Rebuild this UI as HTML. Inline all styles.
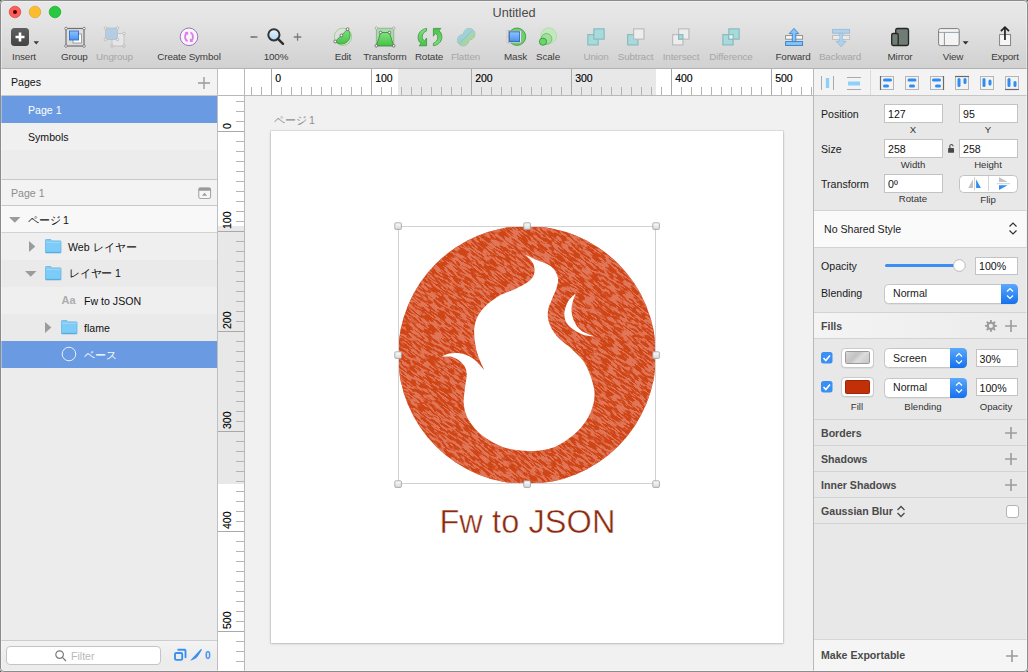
<!DOCTYPE html>
<html><head><meta charset="utf-8">
<style>
*{margin:0;padding:0;box-sizing:border-box}
html,body{width:1028px;height:672px;overflow:hidden;background:#2f6b3c}
body{font-family:"Liberation Sans",sans-serif;position:relative;color:#111}
.a{position:absolute}
svg.a{overflow:visible}
.t{position:absolute;white-space:nowrap;line-height:1}
</style></head><body>

<div class="a" style="left:0;top:0;width:1028px;height:672px;overflow:hidden;border-radius:4px;background:#ececec">
<div class="a" style="left:0px;top:0px;width:1028px;height:68px;background:linear-gradient(#e8e8e8 0px,#e4e4e4 20px,#d1d1d1 68px)"></div>
<div class="a" style="left:0px;top:68px;width:1028px;height:1px;background:#b2b2b2"></div>
<svg class="a" style="left:0px;top:0px;" width="70" height="24" viewBox="0 0 70 24">
<circle cx="15" cy="12" r="5.8" fill="#fc5f57" stroke="#e0443e" stroke-width="0.7"/>
<circle cx="15" cy="12" r="2" fill="#4d0000"/>
<circle cx="35" cy="12" r="5.8" fill="#fdbb2e" stroke="#dea236" stroke-width="0.7"/>
<circle cx="55" cy="12" r="5.8" fill="#28c840" stroke="#1aab29" stroke-width="0.7"/>
</svg>
<div class="t" style="left:364px;width:300px;text-align:center;top:6.55px;font-size:12.7px;color:#4a4a4a;font-weight:normal;">Untitled</div>
<div class="t" style="left:-126px;width:300px;text-align:center;top:51.62px;font-size:9.9px;color:#3c3c3c;font-weight:normal;letter-spacing:-0.15px">Insert</div>
<div class="t" style="left:-75.7px;width:300px;text-align:center;top:51.62px;font-size:9.9px;color:#3c3c3c;font-weight:normal;letter-spacing:-0.15px">Group</div>
<div class="t" style="left:-35.5px;width:300px;text-align:center;top:51.62px;font-size:9.9px;color:#a6a6a6;font-weight:normal;letter-spacing:-0.15px">Ungroup</div>
<div class="t" style="left:39px;width:300px;text-align:center;top:51.62px;font-size:9.9px;color:#3c3c3c;font-weight:normal;letter-spacing:-0.15px">Create Symbol</div>
<div class="t" style="left:126px;width:300px;text-align:center;top:51.62px;font-size:9.9px;color:#3c3c3c;font-weight:normal;letter-spacing:-0.15px">100%</div>
<div class="t" style="left:193px;width:300px;text-align:center;top:51.62px;font-size:9.9px;color:#3c3c3c;font-weight:normal;letter-spacing:-0.15px">Edit</div>
<div class="t" style="left:235px;width:300px;text-align:center;top:51.62px;font-size:9.9px;color:#3c3c3c;font-weight:normal;letter-spacing:-0.15px">Transform</div>
<div class="t" style="left:279px;width:300px;text-align:center;top:51.62px;font-size:9.9px;color:#3c3c3c;font-weight:normal;letter-spacing:-0.15px">Rotate</div>
<div class="t" style="left:315.5px;width:300px;text-align:center;top:51.62px;font-size:9.9px;color:#a6a6a6;font-weight:normal;letter-spacing:-0.15px">Flatten</div>
<div class="t" style="left:365.5px;width:300px;text-align:center;top:51.62px;font-size:9.9px;color:#3c3c3c;font-weight:normal;letter-spacing:-0.15px">Mask</div>
<div class="t" style="left:398px;width:300px;text-align:center;top:51.62px;font-size:9.9px;color:#3c3c3c;font-weight:normal;letter-spacing:-0.15px">Scale</div>
<div class="t" style="left:446px;width:300px;text-align:center;top:51.62px;font-size:9.9px;color:#a6a6a6;font-weight:normal;letter-spacing:-0.15px">Union</div>
<div class="t" style="left:485.5px;width:300px;text-align:center;top:51.62px;font-size:9.9px;color:#a6a6a6;font-weight:normal;letter-spacing:-0.15px">Subtract</div>
<div class="t" style="left:531px;width:300px;text-align:center;top:51.62px;font-size:9.9px;color:#a6a6a6;font-weight:normal;letter-spacing:-0.15px">Intersect</div>
<div class="t" style="left:581px;width:300px;text-align:center;top:51.62px;font-size:9.9px;color:#a6a6a6;font-weight:normal;letter-spacing:-0.15px">Difference</div>
<div class="t" style="left:643px;width:300px;text-align:center;top:51.62px;font-size:9.9px;color:#3c3c3c;font-weight:normal;letter-spacing:-0.15px">Forward</div>
<div class="t" style="left:690px;width:300px;text-align:center;top:51.62px;font-size:9.9px;color:#a6a6a6;font-weight:normal;letter-spacing:-0.15px">Backward</div>
<div class="t" style="left:750px;width:300px;text-align:center;top:51.62px;font-size:9.9px;color:#3c3c3c;font-weight:normal;letter-spacing:-0.15px">Mirror</div>
<div class="t" style="left:803px;width:300px;text-align:center;top:51.62px;font-size:9.9px;color:#3c3c3c;font-weight:normal;letter-spacing:-0.15px">View</div>
<div class="t" style="left:855px;width:300px;text-align:center;top:51.62px;font-size:9.9px;color:#3c3c3c;font-weight:normal;letter-spacing:-0.15px">Export</div>
<svg class="a" style="left:0;top:0" width="1028" height="68" viewBox="0 0 1028 68">
<defs>
<linearGradient id="gIns" x1="0" y1="0" x2="0" y2="1"><stop offset="0" stop-color="#5e5e5e"/><stop offset="1" stop-color="#444"/></linearGradient>
<linearGradient id="gBlue" x1="0" y1="0" x2="0" y2="1"><stop offset="0" stop-color="#8cc4ff"/><stop offset="1" stop-color="#4a94ef"/></linearGradient>
<linearGradient id="gGreen" x1="0" y1="0" x2="0" y2="1"><stop offset="0" stop-color="#7ee27e"/><stop offset="1" stop-color="#47c247"/></linearGradient>
<linearGradient id="gMag" x1="0" y1="0" x2="0" y2="1"><stop offset="0" stop-color="#eaf6ff"/><stop offset="1" stop-color="#a9d6f5"/></linearGradient>
</defs>
<!-- Insert -->
<rect x="11" y="28" width="18" height="18" rx="3.5" fill="url(#gIns)"/>
<path d="M20 32.5v9M15.5 37h9" stroke="#fff" stroke-width="2.6"/>
<path d="M33.5 41.3h5.5l-2.75 3.2z" fill="#3a3a3a"/>
<!-- Group -->
<rect x="66" y="28.5" width="18" height="17.5" fill="none" stroke="#6f6f6f" stroke-width="1.2"/>
<rect x="73" y="34" width="8.5" height="9" fill="#fff" stroke="#8a8a8a" stroke-width="0.8"/>
<rect x="69.5" y="31" width="9" height="9" fill="url(#gBlue)" stroke="#2f6fc8" stroke-width="0.9"/>
<circle cx="66" cy="28.5" r="1.3" fill="#fff" stroke="#6f6f6f" stroke-width="0.8"/><circle cx="84" cy="28.5" r="1.3" fill="#fff" stroke="#6f6f6f" stroke-width="0.8"/><circle cx="66" cy="46" r="1.3" fill="#fff" stroke="#6f6f6f" stroke-width="0.8"/><circle cx="84" cy="46" r="1.3" fill="#fff" stroke="#6f6f6f" stroke-width="0.8"/>
<!-- Ungroup -->
<g opacity="0.45">
<rect x="112" y="33.5" width="12" height="12.5" fill="#f4f4f4" stroke="#999" stroke-width="0.8"/>
<rect x="105.5" y="28" width="12" height="11.5" fill="#7fb8ee" stroke="#888" stroke-width="0.6"/>
<circle cx="105.5" cy="28" r="1.3" fill="#fff" stroke="#888" stroke-width="0.8"/><circle cx="117.5" cy="28" r="1.3" fill="#fff" stroke="#888" stroke-width="0.8"/><circle cx="105.5" cy="39.5" r="1.3" fill="#fff" stroke="#888" stroke-width="0.8"/><circle cx="117.5" cy="39.5" r="1.3" fill="#fff" stroke="#888" stroke-width="0.8"/><circle cx="112" cy="46" r="1.3" fill="#fff" stroke="#888" stroke-width="0.8"/><circle cx="124" cy="46" r="1.3" fill="#fff" stroke="#888" stroke-width="0.8"/><circle cx="124" cy="33.5" r="1.3" fill="#fff" stroke="#888" stroke-width="0.8"/>
</g>
<!-- Create Symbol -->
<circle cx="189" cy="36.8" r="8.8" fill="#f6f6f6" stroke="#a070c8" stroke-width="1"/>
<path d="M187.3 32.8 C184.3 34 184.3 39.8 187.6 41.1" fill="none" stroke="#e07af2" stroke-width="1.8"/>
<path d="M188.2 31.7 L184.6 31.9 L188 35.3z" fill="#e07af2"/>
<path d="M190.7 40.8 C193.7 39.6 193.7 33.8 190.4 32.5" fill="none" stroke="#e07af2" stroke-width="1.8"/>
<path d="M189.8 41.9 L193.4 41.7 L190 38.3z" fill="#e07af2"/>
<!-- zoom -->
<path d="M250.5 37h7" stroke="#6a6a6a" stroke-width="1.3"/>
<path d="M293.8 37h7.5M297.55 33.2v7.6" stroke="#7a7a7a" stroke-width="1.3"/>
<circle cx="273.9" cy="34.8" r="5.6" fill="url(#gMag)" stroke="#333" stroke-width="2"/>
<path d="M278 38.8l5 5" stroke="#2e2e2e" stroke-width="2.4" stroke-linecap="round"/>
<!-- Edit -->
<circle cx="343" cy="36.8" r="8.7" fill="none" stroke="#8fd08f" stroke-width="0.9"/>
<path d="M335.2 41.5 L347.6 29.2 A8.7 8.7 0 0 1 335.2 41.5z" fill="url(#gGreen)" stroke="#3f9e3f" stroke-width="0.9"/>
<circle cx="335.2" cy="41.5" r="1.4" fill="#fff" stroke="#555" stroke-width="0.8"/><circle cx="341.4" cy="35.4" r="1.4" fill="#fff" stroke="#555" stroke-width="0.8"/><circle cx="347.6" cy="29.2" r="1.4" fill="#fff" stroke="#555" stroke-width="0.8"/>
<!-- Transform -->
<rect x="376.3" y="28.2" width="17.5" height="17.8" fill="#a8dca8" stroke="#8aa88a" stroke-width="0.8"/>
<path d="M380.6 32.5h8.8l4.2 13.3h-17.2z" fill="url(#gGreen)" stroke="#3f8e3f" stroke-width="0.9"/>
<circle cx="376.3" cy="28.2" r="1.2" fill="#fff" stroke="#999" stroke-width="0.8"/><circle cx="393.8" cy="28.2" r="1.2" fill="#fff" stroke="#999" stroke-width="0.8"/>
<circle cx="380.6" cy="32.5" r="1.3" fill="#fff" stroke="#555" stroke-width="0.8"/><circle cx="389.4" cy="32.5" r="1.3" fill="#fff" stroke="#555" stroke-width="0.8"/><circle cx="376.3" cy="45.8" r="1.3" fill="#fff" stroke="#555" stroke-width="0.8"/><circle cx="393.7" cy="45.8" r="1.3" fill="#fff" stroke="#555" stroke-width="0.8"/>
<!-- Rotate -->
<path d="M426.6 28.4 C421 29.2 417.5 33.5 418.2 38.5 C418.5 40.5 419.5 42.5 421 43.6 L419.1 45.8 L426.6 45.8 L426.6 38 L424.4 41 C421.6 39 420.8 33.5 426.6 30.9 Z" fill="url(#gGreen)" stroke="#3a8f3a" stroke-width="0.75" stroke-linejoin="round"/>
<path d="M426.6 28.4 C421 29.2 417.5 33.5 418.2 38.5 C418.5 40.5 419.5 42.5 421 43.6 L419.1 45.8 L426.6 45.8 L426.6 38 L424.4 41 C421.6 39 420.8 33.5 426.6 30.9 Z" transform="rotate(180 430 37.1)" fill="url(#gGreen)" stroke="#3a8f3a" stroke-width="0.75" stroke-linejoin="round"/>
<!-- Flatten -->
<defs><clipPath id="fUL"><path d="M440 10 H500 L459.3 43.7 L440 60z" transform="translate(0 0)"/></clipPath></defs>
<g opacity="0.5">
<circle cx="463.2" cy="40.2" r="5.7" fill="none" stroke="#5f8f88" stroke-width="1"/>
<circle cx="469.2" cy="34.2" r="5.7" fill="none" stroke="#5f8f88" stroke-width="1"/>
<circle cx="463.2" cy="40.2" r="5.7" fill="#6fd06f"/>
<circle cx="469.2" cy="34.2" r="5.7" fill="#6fd06f"/>
<g clip-path="url(#fUL)"><circle cx="463.2" cy="40.2" r="5.7" fill="#5ec4d8"/><circle cx="469.2" cy="34.2" r="5.7" fill="#5ec4d8"/></g>
<path d="M459 43.9 L472.6 30.4" stroke="#5f8f88" stroke-width="0.8"/>
</g>
<!-- Mask -->
<rect x="506.5" y="30.5" width="15" height="12.5" fill="none" stroke="#d0d0d0" stroke-width="0.8"/>
<circle cx="517" cy="36.7" r="8.7" fill="#66d466" stroke="#3c9a45" stroke-width="0.9"/>
<rect x="508.3" y="30.8" width="13" height="12" fill="#fafafa" stroke="#9a9a9a" stroke-width="0.6"/>
<rect x="509.3" y="31.8" width="10.4" height="9.6" fill="url(#gBlue)" stroke="#2a5db0" stroke-width="0.9"/>
<!-- Scale -->
<circle cx="548.7" cy="35.7" r="7.9" fill="#c2e8bb" stroke="#a8d4a2" stroke-width="0.6"/>
<circle cx="546.5" cy="38.9" r="5.4" fill="#9fe09b" stroke="#5fae60" stroke-width="0.7"/>
<circle cx="543" cy="41.7" r="3.6" fill="#68d868" stroke="#338a3a" stroke-width="0.8"/>
<!-- Union -->
<rect x="587.85" y="34.65" width="10.3" height="10.3" fill="#a6dadc" stroke="#86b9b9" stroke-width="1.1"/><rect x="593.85" y="28.85" width="10.3" height="10.3" fill="#a6dadc" stroke="#86b9b9" stroke-width="1.1"/><rect x="627.65" y="34.65" width="10.3" height="10.3" fill="#a6dadc" stroke="#86b9b9" stroke-width="1.1"/><rect x="633.65" y="28.85" width="10.3" height="10.3" fill="#ededed" stroke="#b8b8b8" stroke-width="1.1"/><rect x="672.65" y="34.65" width="10.3" height="10.3" fill="#ededed" stroke="#b8b8b8" stroke-width="1.1"/><rect x="678.65" y="28.85" width="10.3" height="10.3" fill="#ededed" stroke="#b8b8b8" stroke-width="1.1"/><rect x="678.65" y="34.65" width="4.30" height="4.50" fill="#a6dadc" stroke="#86b9b9" stroke-width="1.1"/><rect x="722.85" y="34.65" width="10.3" height="10.3" fill="#a6dadc" stroke="#86b9b9" stroke-width="1.1"/><rect x="728.85" y="28.85" width="10.3" height="10.3" fill="#a6dadc" stroke="#86b9b9" stroke-width="1.1"/><rect x="728.85" y="34.65" width="4.30" height="4.50" fill="#f2f2f2" stroke="#86b9b9" stroke-width="1.1"/>
<!-- Forward -->
<rect x="785.6" y="35.6" width="17" height="3.6" fill="#f8f8f8" stroke="#8a8a8a" stroke-width="0.9"/>
<rect x="785.6" y="41.6" width="17" height="3.8" fill="#80c6fb" stroke="#3b78c4" stroke-width="0.9"/>
<path d="M794 28.4 L798.8 33.6 H795.8 V41.6 H792.3 V33.6 H789.2z" fill="#80c6fb" stroke="#3b78c4" stroke-width="0.8" stroke-linejoin="round"/>
<!-- Backward -->
<g opacity="0.5">
<rect x="832.6" y="29.4" width="17" height="3.8" fill="#80c6fb" stroke="#5d95d0" stroke-width="0.9"/>
<rect x="832.6" y="35.6" width="17" height="3.6" fill="#f8f8f8" stroke="#8a8a8a" stroke-width="0.9"/>
<path d="M841.1 46.8 L846.2 41.3 H843 V33.2 H839.3 V41.3 H836z" fill="#80c6fb" stroke="#5d95d0" stroke-width="0.8" stroke-linejoin="round"/>
<rect x="833" y="35.9" width="6.3" height="3" fill="#f8f8f8"/><rect x="843" y="35.9" width="6.3" height="3" fill="#f8f8f8"/>
</g>
<!-- Mirror -->
<rect x="895.7" y="28.5" width="12.8" height="17" rx="1.8" fill="#6f7d75" stroke="#262626" stroke-width="1.3"/>
<rect x="891.7" y="33.5" width="6.5" height="12" rx="1.5" fill="#6f7d75" stroke="#262626" stroke-width="1.3"/>
<!-- View -->
<rect x="938.6" y="28.6" width="20.6" height="17" rx="1.8" fill="#f4f4f4" stroke="#7c7c7c" stroke-width="1"/>
<path d="M939 32.4h20" stroke="#8a97a8" stroke-width="0.9"/><path d="M944.4 32.4v13" stroke="#8a8a8a" stroke-width="0.9"/>
<path d="M962.6 41.2h6l-3 3.2z" fill="#2e2e2e"/>
<!-- Export -->
<rect x="999.6" y="34.6" width="11" height="10.9" fill="#f6f6f6" stroke="#7a7a7a" stroke-width="0.9"/>
<path d="M1004.95 40V27.8" stroke="#1f1f1f" stroke-width="1.7"/>
<path d="M1000.9 31.2l4.05-4 4.05 4" fill="none" stroke="#1f1f1f" stroke-width="1.7"/>
</svg>
<div class="a" style="left:0px;top:69px;width:218px;height:603px;background:#ececec"></div>
<div class="a" style="left:217px;top:69px;width:1px;height:603px;background:#bfbfbf"></div>
<div class="a" style="left:0px;top:69px;width:217px;height:26px;background:#f3f3f3"></div>
<div class="a" style="left:0px;top:95px;width:217px;height:1px;background:#c8c8c8"></div>
<div class="t" style="left:11px;top:76.73px;font-size:10.6px;color:#111;font-weight:normal;">Pages</div>
<svg class="a" style="left:197px;top:76px;" width="14" height="14" viewBox="0 0 14 14"><path d="M7 1v12M1 7h12" stroke="#9b9b9b" stroke-width="1.4"/></svg>
<div class="a" style="left:0px;top:96px;width:217px;height:27px;background:#6a9ae1"></div>
<div class="t" style="left:28px;top:105.03px;font-size:10.6px;color:#fff;font-weight:normal;">Page 1</div>
<div class="a" style="left:0px;top:123px;width:217px;height:27px;background:#f0f0f0"></div>
<div class="t" style="left:28px;top:131.83px;font-size:10.6px;color:#111;font-weight:normal;">Symbols</div>
<div class="a" style="left:0px;top:150px;width:217px;height:29px;background:#ececec"></div>
<div class="a" style="left:0px;top:179px;width:217px;height:1px;background:#c8c8c8"></div>
<div class="a" style="left:0px;top:180px;width:217px;height:25px;background:#f3f3f3"></div>
<div class="a" style="left:0px;top:205px;width:217px;height:1px;background:#c8c8c8"></div>
<div class="t" style="left:11px;top:187.73px;font-size:10.6px;color:#8c8c8c;font-weight:normal;">Page 1</div>
<svg class="a" style="left:198px;top:187px;" width="14" height="13" viewBox="0 0 14 13"><rect x="0.75" y="0.75" width="11.8" height="10.8" rx="1.8" fill="#f6f6f6" stroke="#a6a6a6" stroke-width="1.1"/><path d="M0.9 2.4h11.5" stroke="#9a9a9a" stroke-width="2.6"/><path d="M3.9 8.8h5.2l-2.6-3z" fill="#9c9c9c"/></svg>
<div class="a" style="left:0px;top:206px;width:217px;height:26px;background:#f8f8f8"></div>
<div class="a" style="left:0px;top:232px;width:217px;height:1px;background:#d2d2d2"></div>
<svg class="a" style="left:9px;top:217px;" width="12" height="6" viewBox="0 0 12 6"><path d="M0 0h11.5l-5.75 5.8z" fill="#9b9b9b"/></svg>
<div class="t" style="left:28px;top:214.93px;font-size:10.6px;color:#111;font-weight:normal;">ページ<span style="margin-left:2px">1</span></div>
<div class="a" style="left:0px;top:233px;width:217px;height:27px;background:#efefef"></div>
<svg class="a" style="left:29px;top:241px;" width="7" height="11" viewBox="0 0 7 11"><path d="M0 0v11l6.3-5.5z" fill="#9b9b9b"/></svg>
<svg class="a" style="left:45px;top:239px;" width="17" height="14" viewBox="0 0 17 14"><path d="M0.5 1.2a0.7 0.7 0 0 1 0.7-0.7h4.6l1.3 1.4h8.2a0.7 0.7 0 0 1 0.7 0.7v10.6a0.7 0.7 0 0 1-0.7 0.7h-14.1a0.7 0.7 0 0 1-0.7-0.7z" fill="#7dcbf7" stroke="#67b5e6" stroke-width="0.8"/><path d="M0.9 3.3h14.7" stroke="#a9dcf9" stroke-width="0.8"/><path d="M0.9 13.4h14.7" stroke="#55a6da" stroke-width="0.9"/></svg>
<div class="t" style="left:68px;top:241.63px;font-size:10.6px;color:#111;font-weight:normal;">Web レイヤー</div>
<div class="a" style="left:0px;top:260px;width:217px;height:27px;background:#eaeaea"></div>
<svg class="a" style="left:25px;top:271px;" width="12" height="6" viewBox="0 0 12 6"><path d="M0 0h11.5l-5.75 5.8z" fill="#9b9b9b"/></svg>
<svg class="a" style="left:45px;top:266px;" width="17" height="14" viewBox="0 0 17 14"><path d="M0.5 1.2a0.7 0.7 0 0 1 0.7-0.7h4.6l1.3 1.4h8.2a0.7 0.7 0 0 1 0.7 0.7v10.6a0.7 0.7 0 0 1-0.7 0.7h-14.1a0.7 0.7 0 0 1-0.7-0.7z" fill="#7dcbf7" stroke="#67b5e6" stroke-width="0.8"/><path d="M0.9 3.3h14.7" stroke="#a9dcf9" stroke-width="0.8"/><path d="M0.9 13.4h14.7" stroke="#55a6da" stroke-width="0.9"/></svg>
<div class="t" style="left:69px;top:268.03px;font-size:10.6px;color:#111;font-weight:normal;letter-spacing:-0.2px">レイヤー 1</div>
<div class="a" style="left:0px;top:287px;width:217px;height:27px;background:#efefef"></div>
<div class="t" style="left:61.5px;top:295.29px;font-size:11px;color:#adadad;font-weight:bold;">Aa</div>
<div class="t" style="left:84px;top:295.63px;font-size:10.6px;color:#111;font-weight:normal;">Fw to JSON</div>
<div class="a" style="left:0px;top:314px;width:217px;height:27px;background:#eaeaea"></div>
<svg class="a" style="left:45px;top:322px;" width="7" height="11" viewBox="0 0 7 11"><path d="M0 0v11l6.3-5.5z" fill="#9b9b9b"/></svg>
<svg class="a" style="left:61px;top:320px;" width="17" height="14" viewBox="0 0 17 14"><path d="M0.5 1.2a0.7 0.7 0 0 1 0.7-0.7h4.6l1.3 1.4h8.2a0.7 0.7 0 0 1 0.7 0.7v10.6a0.7 0.7 0 0 1-0.7 0.7h-14.1a0.7 0.7 0 0 1-0.7-0.7z" fill="#7dcbf7" stroke="#67b5e6" stroke-width="0.8"/><path d="M0.9 3.3h14.7" stroke="#a9dcf9" stroke-width="0.8"/><path d="M0.9 13.4h14.7" stroke="#55a6da" stroke-width="0.9"/></svg>
<div class="t" style="left:84px;top:322.63px;font-size:10.6px;color:#111;font-weight:normal;">flame</div>
<div class="a" style="left:0px;top:341px;width:217px;height:27px;background:#6a9ae1"></div>
<svg class="a" style="left:61px;top:346px;" width="16" height="16" viewBox="0 0 16 16"><circle cx="8" cy="8" r="6.8" fill="none" stroke="#e8f0fb" stroke-width="1"/></svg>
<div class="t" style="left:84px;top:349.63px;font-size:10.6px;color:#fff;font-weight:normal;">ベース</div>
<div class="a" style="left:0px;top:640px;width:217px;height:1px;background:#cdcdcd"></div>
<div class="a" style="left:0px;top:641px;width:217px;height:31px;background:linear-gradient(#f3f3f3,#ececec 60%)"></div>
<div class="a" style="left:5.5px;top:646px;width:155px;height:18.5px;background:#fff;border:1px solid #c4c4c4;border-radius:4px"></div>
<svg class="a" style="left:55px;top:650px;" width="12" height="12" viewBox="0 0 12 12"><circle cx="4.6" cy="4.6" r="3.8" fill="none" stroke="#7a7a7a" stroke-width="1.2"/><path d="M7.4 7.4l3.6 3.6" stroke="#7a7a7a" stroke-width="1.3"/></svg>
<div class="t" style="left:71px;top:651.03px;font-size:10.6px;color:#b8b8b8;font-weight:normal;">Filter</div>
<svg class="a" style="left:0;top:0" width="1028" height="672" viewBox="0 0 1028 672"><rect x="175" y="653" width="7.2" height="6.9" rx="1.2" fill="none" stroke="#3b8ef2" stroke-width="1.9"/><path d="M178.2 649.8H184.6a0.9 0.9 0 0 1 0.9 0.9V657.3" fill="none" stroke="#3b8ef2" stroke-width="1.9" stroke-linecap="round"/><path d="M190 660.8 L200.4 649.6 Q201.9 648.4 201.8 650.1 L199.2 654.2 Q196.5 659.2 190 660.8z" fill="#3b8ef2"/><text x="205" y="659.3" font-size="10" font-weight="bold" fill="#3b8ef2" font-family="Liberation Sans">0</text></svg>
<div class="a" style="left:218px;top:69px;width:26px;height:26px;background:#fff"></div>
<div class="a" style="left:244px;top:69px;width:569px;height:26px;background:#fff"></div>
<div class="a" style="left:398px;top:69px;width:258px;height:26px;background:#e8e8e8"></div>
<div class="a" style="left:244px;top:95px;width:569px;height:1px;background:#b8b8b8"></div>
<div class="a" style="left:244px;top:69px;width:1px;height:603px;background:#b8b8b8"></div>
<svg class="a" style="left:0;top:0" width="1028" height="672" viewBox="0 0 1028 672"><path d="M251.5 87V95" stroke="#b4b4b4" stroke-width="1"/><path d="M261.5 87V95" stroke="#b4b4b4" stroke-width="1"/><path d="M271.5 69V95" stroke="#a9a9a9" stroke-width="1"/><path d="M281.5 87V95" stroke="#b4b4b4" stroke-width="1"/><path d="M291.5 87V95" stroke="#b4b4b4" stroke-width="1"/><path d="M301.5 87V95" stroke="#b4b4b4" stroke-width="1"/><path d="M311.5 87V95" stroke="#b4b4b4" stroke-width="1"/><path d="M321.5 87V95" stroke="#b4b4b4" stroke-width="1"/><path d="M331.5 87V95" stroke="#b4b4b4" stroke-width="1"/><path d="M341.5 87V95" stroke="#b4b4b4" stroke-width="1"/><path d="M351.5 87V95" stroke="#b4b4b4" stroke-width="1"/><path d="M361.5 87V95" stroke="#b4b4b4" stroke-width="1"/><path d="M371.5 69V95" stroke="#a9a9a9" stroke-width="1"/><path d="M381.5 87V95" stroke="#b4b4b4" stroke-width="1"/><path d="M391.5 87V95" stroke="#b4b4b4" stroke-width="1"/><path d="M401.5 87V95" stroke="#b4b4b4" stroke-width="1"/><path d="M411.5 87V95" stroke="#b4b4b4" stroke-width="1"/><path d="M421.5 87V95" stroke="#b4b4b4" stroke-width="1"/><path d="M431.5 87V95" stroke="#b4b4b4" stroke-width="1"/><path d="M441.5 87V95" stroke="#b4b4b4" stroke-width="1"/><path d="M451.5 87V95" stroke="#b4b4b4" stroke-width="1"/><path d="M461.5 87V95" stroke="#b4b4b4" stroke-width="1"/><path d="M471.5 69V95" stroke="#a9a9a9" stroke-width="1"/><path d="M481.5 87V95" stroke="#b4b4b4" stroke-width="1"/><path d="M491.5 87V95" stroke="#b4b4b4" stroke-width="1"/><path d="M501.5 87V95" stroke="#b4b4b4" stroke-width="1"/><path d="M511.5 87V95" stroke="#b4b4b4" stroke-width="1"/><path d="M521.5 87V95" stroke="#b4b4b4" stroke-width="1"/><path d="M531.5 87V95" stroke="#b4b4b4" stroke-width="1"/><path d="M541.5 87V95" stroke="#b4b4b4" stroke-width="1"/><path d="M551.5 87V95" stroke="#b4b4b4" stroke-width="1"/><path d="M561.5 87V95" stroke="#b4b4b4" stroke-width="1"/><path d="M571.5 69V95" stroke="#a9a9a9" stroke-width="1"/><path d="M581.5 87V95" stroke="#b4b4b4" stroke-width="1"/><path d="M591.5 87V95" stroke="#b4b4b4" stroke-width="1"/><path d="M601.5 87V95" stroke="#b4b4b4" stroke-width="1"/><path d="M611.5 87V95" stroke="#b4b4b4" stroke-width="1"/><path d="M621.5 87V95" stroke="#b4b4b4" stroke-width="1"/><path d="M631.5 87V95" stroke="#b4b4b4" stroke-width="1"/><path d="M641.5 87V95" stroke="#b4b4b4" stroke-width="1"/><path d="M651.5 87V95" stroke="#b4b4b4" stroke-width="1"/><path d="M661.5 87V95" stroke="#b4b4b4" stroke-width="1"/><path d="M671.5 69V95" stroke="#a9a9a9" stroke-width="1"/><path d="M681.5 87V95" stroke="#b4b4b4" stroke-width="1"/><path d="M691.5 87V95" stroke="#b4b4b4" stroke-width="1"/><path d="M701.5 87V95" stroke="#b4b4b4" stroke-width="1"/><path d="M711.5 87V95" stroke="#b4b4b4" stroke-width="1"/><path d="M721.5 87V95" stroke="#b4b4b4" stroke-width="1"/><path d="M731.5 87V95" stroke="#b4b4b4" stroke-width="1"/><path d="M741.5 87V95" stroke="#b4b4b4" stroke-width="1"/><path d="M751.5 87V95" stroke="#b4b4b4" stroke-width="1"/><path d="M761.5 87V95" stroke="#b4b4b4" stroke-width="1"/><path d="M771.5 69V95" stroke="#a9a9a9" stroke-width="1"/><path d="M781.5 87V95" stroke="#b4b4b4" stroke-width="1"/><path d="M791.5 87V95" stroke="#b4b4b4" stroke-width="1"/><path d="M801.5 87V95" stroke="#b4b4b4" stroke-width="1"/><path d="M811.5 87V95" stroke="#b4b4b4" stroke-width="1"/></svg>
<div class="t" style="left:275.2px;top:73.11px;font-size:10.5px;color:#000;font-weight:normal;-webkit-text-stroke:0.15px #000">0</div>
<div class="t" style="left:375.2px;top:73.11px;font-size:10.5px;color:#000;font-weight:normal;-webkit-text-stroke:0.15px #000">100</div>
<div class="t" style="left:475.2px;top:73.11px;font-size:10.5px;color:#000;font-weight:normal;-webkit-text-stroke:0.15px #000">200</div>
<div class="t" style="left:575.2px;top:73.11px;font-size:10.5px;color:#000;font-weight:normal;-webkit-text-stroke:0.15px #000">300</div>
<div class="t" style="left:675.2px;top:73.11px;font-size:10.5px;color:#000;font-weight:normal;-webkit-text-stroke:0.15px #000">400</div>
<div class="t" style="left:775.2px;top:73.11px;font-size:10.5px;color:#000;font-weight:normal;-webkit-text-stroke:0.15px #000">500</div>
<div class="a" style="left:218px;top:96px;width:26px;height:576px;background:#fff"></div>
<div class="a" style="left:218px;top:226px;width:26px;height:258px;background:#e8e8e8"></div>
<div class="a" style="left:218px;top:95px;width:26px;height:1px;background:#b8b8b8"></div>
<svg class="a" style="left:0;top:0" width="1028" height="672" viewBox="0 0 1028 672"><path d="M236 101.5H244" stroke="#b4b4b4" stroke-width="1"/><path d="M236 111.5H244" stroke="#b4b4b4" stroke-width="1"/><path d="M236 121.5H244" stroke="#b4b4b4" stroke-width="1"/><path d="M218 131.5H244" stroke="#a9a9a9" stroke-width="1"/><path d="M236 141.5H244" stroke="#b4b4b4" stroke-width="1"/><path d="M236 151.5H244" stroke="#b4b4b4" stroke-width="1"/><path d="M236 161.5H244" stroke="#b4b4b4" stroke-width="1"/><path d="M236 171.5H244" stroke="#b4b4b4" stroke-width="1"/><path d="M236 181.5H244" stroke="#b4b4b4" stroke-width="1"/><path d="M236 191.5H244" stroke="#b4b4b4" stroke-width="1"/><path d="M236 201.5H244" stroke="#b4b4b4" stroke-width="1"/><path d="M236 211.5H244" stroke="#b4b4b4" stroke-width="1"/><path d="M236 221.5H244" stroke="#b4b4b4" stroke-width="1"/><path d="M218 231.5H244" stroke="#a9a9a9" stroke-width="1"/><path d="M236 241.5H244" stroke="#b4b4b4" stroke-width="1"/><path d="M236 251.5H244" stroke="#b4b4b4" stroke-width="1"/><path d="M236 261.5H244" stroke="#b4b4b4" stroke-width="1"/><path d="M236 271.5H244" stroke="#b4b4b4" stroke-width="1"/><path d="M236 281.5H244" stroke="#b4b4b4" stroke-width="1"/><path d="M236 291.5H244" stroke="#b4b4b4" stroke-width="1"/><path d="M236 301.5H244" stroke="#b4b4b4" stroke-width="1"/><path d="M236 311.5H244" stroke="#b4b4b4" stroke-width="1"/><path d="M236 321.5H244" stroke="#b4b4b4" stroke-width="1"/><path d="M218 331.5H244" stroke="#a9a9a9" stroke-width="1"/><path d="M236 341.5H244" stroke="#b4b4b4" stroke-width="1"/><path d="M236 351.5H244" stroke="#b4b4b4" stroke-width="1"/><path d="M236 361.5H244" stroke="#b4b4b4" stroke-width="1"/><path d="M236 371.5H244" stroke="#b4b4b4" stroke-width="1"/><path d="M236 381.5H244" stroke="#b4b4b4" stroke-width="1"/><path d="M236 391.5H244" stroke="#b4b4b4" stroke-width="1"/><path d="M236 401.5H244" stroke="#b4b4b4" stroke-width="1"/><path d="M236 411.5H244" stroke="#b4b4b4" stroke-width="1"/><path d="M236 421.5H244" stroke="#b4b4b4" stroke-width="1"/><path d="M218 431.5H244" stroke="#a9a9a9" stroke-width="1"/><path d="M236 441.5H244" stroke="#b4b4b4" stroke-width="1"/><path d="M236 451.5H244" stroke="#b4b4b4" stroke-width="1"/><path d="M236 461.5H244" stroke="#b4b4b4" stroke-width="1"/><path d="M236 471.5H244" stroke="#b4b4b4" stroke-width="1"/><path d="M236 481.5H244" stroke="#b4b4b4" stroke-width="1"/><path d="M236 491.5H244" stroke="#b4b4b4" stroke-width="1"/><path d="M236 501.5H244" stroke="#b4b4b4" stroke-width="1"/><path d="M236 511.5H244" stroke="#b4b4b4" stroke-width="1"/><path d="M236 521.5H244" stroke="#b4b4b4" stroke-width="1"/><path d="M218 531.5H244" stroke="#a9a9a9" stroke-width="1"/><path d="M236 541.5H244" stroke="#b4b4b4" stroke-width="1"/><path d="M236 551.5H244" stroke="#b4b4b4" stroke-width="1"/><path d="M236 561.5H244" stroke="#b4b4b4" stroke-width="1"/><path d="M236 571.5H244" stroke="#b4b4b4" stroke-width="1"/><path d="M236 581.5H244" stroke="#b4b4b4" stroke-width="1"/><path d="M236 591.5H244" stroke="#b4b4b4" stroke-width="1"/><path d="M236 601.5H244" stroke="#b4b4b4" stroke-width="1"/><path d="M236 611.5H244" stroke="#b4b4b4" stroke-width="1"/><path d="M236 621.5H244" stroke="#b4b4b4" stroke-width="1"/><path d="M218 631.5H244" stroke="#a9a9a9" stroke-width="1"/><path d="M236 641.5H244" stroke="#b4b4b4" stroke-width="1"/><path d="M236 651.5H244" stroke="#b4b4b4" stroke-width="1"/><path d="M236 661.5H244" stroke="#b4b4b4" stroke-width="1"/><path d="M236 671.5H244" stroke="#b4b4b4" stroke-width="1"/></svg>
<div class="t" style="left:222px;top:129px;font-size:10.5px;color:#000;-webkit-text-stroke:0.15px #000;transform-origin:0 0;transform:rotate(-90deg)">0</div>
<div class="t" style="left:222px;top:229px;font-size:10.5px;color:#000;-webkit-text-stroke:0.15px #000;transform-origin:0 0;transform:rotate(-90deg)">100</div>
<div class="t" style="left:222px;top:329px;font-size:10.5px;color:#000;-webkit-text-stroke:0.15px #000;transform-origin:0 0;transform:rotate(-90deg)">200</div>
<div class="t" style="left:222px;top:429px;font-size:10.5px;color:#000;-webkit-text-stroke:0.15px #000;transform-origin:0 0;transform:rotate(-90deg)">300</div>
<div class="t" style="left:222px;top:529px;font-size:10.5px;color:#000;-webkit-text-stroke:0.15px #000;transform-origin:0 0;transform:rotate(-90deg)">400</div>
<div class="t" style="left:222px;top:629px;font-size:10.5px;color:#000;-webkit-text-stroke:0.15px #000;transform-origin:0 0;transform:rotate(-90deg)">500</div>
<div class="a" style="left:245px;top:96px;width:568px;height:576px;background:#f1f1f1"></div>
<div class="t" style="left:274px;top:115.03px;font-size:10.6px;color:#8e8e8e;font-weight:normal;">ページ<span style="margin-left:2px">1</span></div>
<div class="a" style="left:271px;top:131px;width:512px;height:512px;background:#fff;box-shadow:0 0 0 1px rgba(0,0,0,0.08),0 0.5px 3px rgba(0,0,0,0.2)"></div>
<svg class="a" style="left:0;top:0" width="1028" height="672" viewBox="0 0 1028 672">
<defs>
<clipPath id="cc"><circle cx="527" cy="355" r="129"/></clipPath>
<filter id="tx" x="0" y="0" width="1" height="1" filterUnits="objectBoundingBox" color-interpolation-filters="sRGB">
<feTurbulence type="fractalNoise" baseFrequency="0.1 0.75" numOctaves="4" seed="7" result="n"/>
<feColorMatrix in="n" type="matrix" values="0 0 0 0 0.878  0 0 0 0 0.46  0 0 0 0 0.34  0 0 0 -10 5.45"/>
</filter>
</defs>
<g clip-path="url(#cc)">
<rect x="398" y="226" width="258" height="258" fill="#cf4516"/>
<g transform="rotate(37 527 355)"><rect x="340" y="170" width="374" height="374" filter="url(#tx)"/></g>
</g>
<path d="M524.8 254.3 C526.57 255.17 531.05 257.50 535.40 259.50 C539.75 261.50 547.18 263.40 550.90 266.30 C554.62 269.20 556.73 273.35 557.70 276.90 C558.67 280.45 557.67 283.88 556.70 287.60 C555.73 291.32 553.35 295.33 551.90 299.20 C550.45 303.07 548.48 306.93 548.00 310.80 C547.52 314.67 547.55 318.22 549.00 322.40 C550.45 326.58 552.83 331.40 556.70 335.90 C560.57 340.40 567.37 344.57 572.20 349.40 C577.03 354.23 582.00 357.95 585.70 364.90 C589.40 371.85 593.60 383.18 594.40 391.10 C595.20 399.02 593.40 405.63 590.50 412.40 C587.60 419.17 583.12 425.90 577.00 431.70 C570.88 437.50 561.87 443.98 553.80 447.20 C545.73 450.42 536.98 451.00 528.60 451.00 C520.22 451.00 511.23 449.77 503.50 447.20 C495.77 444.63 488.00 440.12 482.20 435.60 C476.40 431.08 471.77 425.27 468.70 420.10 C465.63 414.93 464.45 409.75 463.80 404.60 C463.15 399.45 464.32 394.35 464.80 389.20 C465.28 384.05 467.02 377.90 466.70 373.70 C466.38 369.50 465.15 366.75 462.90 364.00 C460.65 361.25 456.82 358.42 453.20 357.20 C449.58 355.98 443.20 356.78 441.20 356.70 C442.55 356.15 446.00 353.95 449.30 353.40 C452.60 352.85 457.12 352.60 461.00 353.40 C464.88 354.20 468.73 355.47 472.60 358.20 C476.47 360.93 482.27 367.87 484.20 369.80 C483.38 368.02 480.75 363.13 479.30 359.10 C477.85 355.07 476.30 351.08 475.50 345.60 C474.70 340.12 473.53 332.00 474.50 326.20 C475.47 320.40 477.58 315.63 481.30 310.80 C485.02 305.97 491.32 300.75 496.80 297.20 C502.28 293.65 508.73 292.23 514.20 289.50 C519.67 286.77 526.22 283.72 529.60 280.80 C532.98 277.88 534.02 275.07 534.50 272.00 C534.98 268.93 534.12 265.35 532.50 262.40 C530.88 259.45 526.08 255.65 524.80 254.30Z" fill="#fff"/>
<path d="M575.7 293.4 C574.47 294.68 570.18 297.88 568.30 301.10 C566.42 304.32 564.72 309.15 564.40 312.70 C564.08 316.25 564.78 319.50 566.40 322.40 C568.02 325.30 571.20 328.02 574.10 330.10 C577.00 332.18 580.57 333.87 583.80 334.90 C587.03 335.93 591.88 336.07 593.50 336.30 C591.42 335.33 584.17 332.88 581.00 330.50 C577.83 328.12 576.08 325.25 574.50 322.00 C572.92 318.75 571.78 314.42 571.50 311.00 C571.22 307.58 572.10 304.43 572.80 301.50 C573.50 298.57 575.22 294.75 575.70 293.40Z" fill="#fff"/>
</svg>
<div class="t" style="left:377.5px;width:300px;text-align:center;top:505.79px;font-size:32.5px;color:#8c2a0d;font-weight:normal;letter-spacing:0.1px;-webkit-text-stroke:0.45px #fff">Fw to JSON</div>
<svg class="a" style="left:0;top:0" width="1028" height="672" viewBox="0 0 1028 672"><defs><linearGradient id="hg" x1="0" y1="0" x2="0" y2="1"><stop offset="0" stop-color="#fdfdfd"/><stop offset="1" stop-color="#d9d9d9"/></linearGradient></defs><rect x="398.5" y="226.5" width="257" height="257" fill="none" stroke="#d2d2d2" stroke-width="1"/><rect x="394.8" y="222.8" width="6.6" height="6.6" rx="1" fill="url(#hg)" stroke="#9d9d9d" stroke-width="0.8"/><rect x="394.8" y="351.8" width="6.6" height="6.6" rx="1" fill="url(#hg)" stroke="#9d9d9d" stroke-width="0.8"/><rect x="394.8" y="480.8" width="6.6" height="6.6" rx="1" fill="url(#hg)" stroke="#9d9d9d" stroke-width="0.8"/><rect x="523.8" y="222.8" width="6.6" height="6.6" rx="1" fill="url(#hg)" stroke="#9d9d9d" stroke-width="0.8"/><rect x="523.8" y="480.8" width="6.6" height="6.6" rx="1" fill="url(#hg)" stroke="#9d9d9d" stroke-width="0.8"/><rect x="652.8" y="222.8" width="6.6" height="6.6" rx="1" fill="url(#hg)" stroke="#9d9d9d" stroke-width="0.8"/><rect x="652.8" y="351.8" width="6.6" height="6.6" rx="1" fill="url(#hg)" stroke="#9d9d9d" stroke-width="0.8"/><rect x="652.8" y="480.8" width="6.6" height="6.6" rx="1" fill="url(#hg)" stroke="#9d9d9d" stroke-width="0.8"/></svg>
<div class="a" style="left:813px;top:69px;width:1px;height:603px;background:#b9b9b9"></div>
<div class="a" style="left:814px;top:69px;width:214px;height:603px;background:#e8e8e8"></div>
<div class="a" style="left:814px;top:69px;width:214px;height:26px;background:#f3f3f3"></div>
<div class="a" style="left:814px;top:95px;width:214px;height:1px;background:#c6c6c6"></div>
<svg class="a" style="left:0;top:0" width="1028" height="672" viewBox="0 0 1028 672">
<path d="M821.5 76v14M833.5 76v14" stroke="#aaa" stroke-width="1"/><rect x="825.8" y="78" width="3.4" height="10" fill="#8fd0fb"/>
<path d="M847 77.5h14M847 89.5h14" stroke="#aaa" stroke-width="1"/><rect x="848" y="81.5" width="12" height="4" fill="#8fd0fb"/>
<path d="M870.5 70v25" stroke="#dadada" stroke-width="1"/>
<rect x="880.5" y="76.5" width="13" height="13" fill="none" stroke="#b5b5b5" stroke-width="1"/><path d="M880.5 76v14" stroke="#6a6a6a" stroke-width="1.2"/><rect x="883" y="78.5" width="9" height="3" rx="1.5" fill="#2e8cf2"/><rect x="883" y="84.5" width="6" height="3" rx="1.5" fill="#2e8cf2"/><rect x="905.5" y="76.5" width="13" height="13" fill="none" stroke="#b5b5b5" stroke-width="1"/><rect x="907.5" y="78.5" width="9" height="3" rx="1.5" fill="#2e8cf2"/><rect x="909" y="84.5" width="6" height="3" rx="1.5" fill="#2e8cf2"/><rect x="930.5" y="76.5" width="13" height="13" fill="none" stroke="#b5b5b5" stroke-width="1"/><path d="M943.5 76v14" stroke="#6a6a6a" stroke-width="1.2"/><rect x="932" y="78.5" width="9" height="3" rx="1.5" fill="#2e8cf2"/><rect x="935" y="84.5" width="6" height="3" rx="1.5" fill="#2e8cf2"/><rect x="955.5" y="76.5" width="13" height="13" fill="none" stroke="#b5b5b5" stroke-width="1"/><path d="M955 76.5h14" stroke="#6a6a6a" stroke-width="1.2"/><rect x="957.5" y="78" width="3" height="9" rx="1.5" fill="#2e8cf2"/><rect x="963.5" y="78" width="3" height="6" rx="1.5" fill="#2e8cf2"/><rect x="980.5" y="76.5" width="13" height="13" fill="none" stroke="#b5b5b5" stroke-width="1"/><rect x="982.5" y="78" width="3" height="9" rx="1.5" fill="#2e8cf2"/><rect x="988.5" y="79.5" width="3" height="6" rx="1.5" fill="#2e8cf2"/><rect x="1005.5" y="76.5" width="13" height="13" fill="none" stroke="#b5b5b5" stroke-width="1"/><path d="M1005 89.5h14" stroke="#6a6a6a" stroke-width="1.2"/><rect x="1007.5" y="78" width="3" height="9" rx="1.5" fill="#2e8cf2"/><rect x="1013.5" y="81" width="3" height="6" rx="1.5" fill="#2e8cf2"/></svg>
<div class="t" style="left:821px;top:109.03px;font-size:10.6px;color:#1a1a1a;font-weight:normal;">Position</div>
<div class="a" style="left:884px;top:104px;width:59px;height:19px;background:#fff;border:1px solid #c3c3c3"></div>
<div class="t" style="left:888px;top:109.33px;font-size:10.6px;color:#111;font-weight:normal;">127</div>
<div class="a" style="left:959px;top:104px;width:59px;height:19px;background:#fff;border:1px solid #c3c3c3"></div>
<div class="t" style="left:963px;top:109.33px;font-size:10.6px;color:#111;font-weight:normal;">95</div>
<div class="t" style="left:763px;width:300px;text-align:center;top:124.87px;font-size:9.6px;color:#333;font-weight:normal;">X</div>
<div class="t" style="left:838px;width:300px;text-align:center;top:124.87px;font-size:9.6px;color:#333;font-weight:normal;">Y</div>
<div class="t" style="left:821px;top:144.03px;font-size:10.6px;color:#1a1a1a;font-weight:normal;">Size</div>
<div class="a" style="left:884px;top:139px;width:59px;height:19px;background:#fff;border:1px solid #c3c3c3"></div>
<div class="t" style="left:888px;top:144.33px;font-size:10.6px;color:#111;font-weight:normal;">258</div>
<div class="a" style="left:959px;top:139px;width:59px;height:19px;background:#fff;border:1px solid #c3c3c3"></div>
<div class="t" style="left:963px;top:144.33px;font-size:10.6px;color:#111;font-weight:normal;">258</div>
<svg class="a" style="left:0;top:0" width="1028" height="672" viewBox="0 0 1028 672"><path d="M949.9 148.3V146.2A1.55 1.55 0 0 1 953 145.9V146.3" fill="none" stroke="#4a4a4a" stroke-width="1.15"/><rect x="948.1" y="148" width="5.9" height="4.8" rx="0.4" fill="#484848"/></svg>
<div class="t" style="left:763px;width:300px;text-align:center;top:160.37px;font-size:9.6px;color:#333;font-weight:normal;">Width</div>
<div class="t" style="left:838px;width:300px;text-align:center;top:160.37px;font-size:9.6px;color:#333;font-weight:normal;">Height</div>
<div class="t" style="left:821px;top:179.03px;font-size:10.6px;color:#1a1a1a;font-weight:normal;">Transform</div>
<div class="a" style="left:884px;top:174px;width:59px;height:19px;background:#fff;border:1px solid #c3c3c3"></div>
<div class="t" style="left:888px;top:179.33px;font-size:10.6px;color:#111;font-weight:normal;">0º</div>
<div class="a" style="left:959px;top:174.5px;width:59px;height:18.5px;background:#fff;border:1px solid #c3c3c3;border-radius:4.5px"></div>
<div class="a" style="left:988px;top:176px;width:1px;height:15px;background:#d5d5d5"></div>
<svg class="a" style="left:0;top:0" width="1028" height="672" viewBox="0 0 1028 672"><path d="M968.2 188V179.3L973 179.3z" fill="none"/><path d="M968.2 188L973 179.3V188z" fill="#c2c2c2"/><path d="M976.1 179.3V188H980.9z" fill="#2f8ef3"/><path d="M974.6 177V190.5" stroke="#c8c8c8" stroke-width="0.9"/><path d="M999 177V182H1007.6z" fill="#c2c2c2"/><path d="M997 183.7H1010" stroke="#c8c8c8" stroke-width="0.9"/><path d="M999 185.3H1007.6L999 190z" fill="#2f8ef3"/></svg>
<div class="t" style="left:763px;width:300px;text-align:center;top:193.87px;font-size:9.6px;color:#333;font-weight:normal;">Rotate</div>
<div class="t" style="left:838px;width:300px;text-align:center;top:195.37px;font-size:9.6px;color:#333;font-weight:normal;">Flip</div>
<div class="a" style="left:814px;top:210px;width:214px;height:1px;background:#d3d3d3"></div>
<div class="a" style="left:814px;top:211px;width:212px;height:36px;background:#fafafa"></div>
<div class="a" style="left:814px;top:247px;width:214px;height:1px;background:#d3d3d3"></div>
<div class="t" style="left:824px;top:224.03px;font-size:10.6px;color:#1a1a1a;font-weight:normal;">No Shared Style</div>
<svg class="a" style="left:1008px;top:221px;" width="10" height="15" viewBox="0 0 10 15"><path d="M1.5 5.5l3.5-3.5 3.5 3.5M1.5 9.5l3.5 3.5 3.5-3.5" fill="none" stroke="#333" stroke-width="1.2"/></svg>
<div class="t" style="left:821px;top:261.03px;font-size:10.6px;color:#1a1a1a;font-weight:normal;">Opacity</div>
<div class="a" style="left:885px;top:264px;width:74px;height:3px;background:#3d8ef2;border-radius:1.5px"></div>
<svg class="a" style="left:952px;top:258px;filter:drop-shadow(0 0.5px 0.5px rgba(0,0,0,0.25))" width="15" height="15" viewBox="0 0 15 15"><circle cx="7.3" cy="7.5" r="5.8" fill="#fff" stroke="#c2c2c2" stroke-width="0.8"/></svg>
<div class="a" style="left:975px;top:256.5px;width:43px;height:18px;background:#fff;border:1px solid #c3c3c3"></div>
<div class="t" style="left:979px;top:261.33px;font-size:10.6px;color:#111;font-weight:normal;">100%</div>
<div class="t" style="left:821px;top:288.03px;font-size:10.6px;color:#1a1a1a;font-weight:normal;">Blending</div>
<div class="a" style="left:884px;top:283.5px;width:134px;height:20px;background:#fff;border:1px solid #c6c6c6;border-radius:4.5px;overflow:hidden;box-shadow:0 0.5px 0.5px rgba(0,0,0,0.08)"></div>
<div class="a" style="left:1001px;top:283.5px;width:17px;height:20px;background:linear-gradient(#5aa9fc,#1670ec);border-radius:0 4.5px 4.5px 0"></div>
<svg class="a" style="left:1005.5px;top:287.0px;" width="8" height="13" viewBox="0 0 8 13"><path d="M1 4.5l3-3 3 3M1 8.5l3 3 3-3" fill="none" stroke="#fff" stroke-width="1.2"/></svg>
<div class="t" style="left:893px;top:288.43px;font-size:10.6px;color:#1a1a1a;font-weight:normal;">Normal</div>
<div class="a" style="left:814px;top:312px;width:214px;height:1px;background:#d3d3d3"></div>
<div class="a" style="left:814px;top:313px;width:214px;height:25px;background:linear-gradient(90deg,#f4f4f4,#ebebeb)"></div>
<div class="a" style="left:814px;top:338px;width:214px;height:1px;background:#d3d3d3"></div>
<div class="t" style="left:821px;top:321.03px;font-size:10.6px;color:#4a4a4a;font-weight:bold;">Fills</div>
<svg class="a" style="left:984px;top:319px;" width="14" height="14" viewBox="0 0 14 14"><g transform="translate(6.9 6.9)"><circle r="3.1" fill="none" stroke="#9c9c9c" stroke-width="2"/><rect x="-0.95" y="-5.9" width="1.9" height="3" fill="#9c9c9c" transform="rotate(0)"/><rect x="-0.95" y="-5.9" width="1.9" height="3" fill="#9c9c9c" transform="rotate(45)"/><rect x="-0.95" y="-5.9" width="1.9" height="3" fill="#9c9c9c" transform="rotate(90)"/><rect x="-0.95" y="-5.9" width="1.9" height="3" fill="#9c9c9c" transform="rotate(135)"/><rect x="-0.95" y="-5.9" width="1.9" height="3" fill="#9c9c9c" transform="rotate(180)"/><rect x="-0.95" y="-5.9" width="1.9" height="3" fill="#9c9c9c" transform="rotate(225)"/><rect x="-0.95" y="-5.9" width="1.9" height="3" fill="#9c9c9c" transform="rotate(270)"/><rect x="-0.95" y="-5.9" width="1.9" height="3" fill="#9c9c9c" transform="rotate(315)"/></g></svg>
<svg class="a" style="left:1005px;top:320px;" width="14" height="14" viewBox="0 0 14 14"><path d="M6 0.1v11.8M0.1 6h11.8" stroke="#9c9c9c" stroke-width="1.6"/></svg>
<svg class="a" style="left:821.3px;top:352.3px;" width="12" height="12" viewBox="0 0 12 12"><rect x="0" y="0" width="11.5" height="11.5" rx="2.5" fill="#3a8ff5"/><path d="M2.5 6l2.3 2.5 4.2-5" fill="none" stroke="#fff" stroke-width="1.6"/></svg>
<div class="a" style="left:840.5px;top:347.5px;width:33px;height:20px;background:#fff;border:1px solid #cacaca;border-radius:4px;box-shadow:0 0.5px 0.5px rgba(0,0,0,0.1)"></div>
<div class="a" style="left:844.5px;top:351px;width:25px;height:13px;background:linear-gradient(135deg,#d8d8d8,#c2c2c2 40%,#dcdcdc 60%,#c6c6c6);border:1px solid #9a9a9a;border-radius:1.5px"></div>
<div class="a" style="left:884px;top:348.3px;width:83px;height:20px;background:#fff;border:1px solid #c6c6c6;border-radius:4.5px;overflow:hidden;box-shadow:0 0.5px 0.5px rgba(0,0,0,0.08)"></div>
<div class="a" style="left:950px;top:348.3px;width:17px;height:20px;background:linear-gradient(#5aa9fc,#1670ec);border-radius:0 4.5px 4.5px 0"></div>
<svg class="a" style="left:954.5px;top:351.8px;" width="8" height="13" viewBox="0 0 8 13"><path d="M1 4.5l3-3 3 3M1 8.5l3 3 3-3" fill="none" stroke="#fff" stroke-width="1.2"/></svg>
<div class="t" style="left:893px;top:353.23px;font-size:10.6px;color:#1a1a1a;font-weight:normal;">Screen</div>
<div class="a" style="left:975.5px;top:349px;width:42.5px;height:17.5px;background:#fff;border:1px solid #c3c3c3"></div>
<div class="t" style="left:979.5px;top:353.58px;font-size:10.6px;color:#111;font-weight:normal;">30%</div>
<svg class="a" style="left:821.3px;top:381.3px;" width="12" height="12" viewBox="0 0 12 12"><rect x="0" y="0" width="11.5" height="11.5" rx="2.5" fill="#3a8ff5"/><path d="M2.5 6l2.3 2.5 4.2-5" fill="none" stroke="#fff" stroke-width="1.6"/></svg>
<div class="a" style="left:840.5px;top:376.5px;width:33px;height:20.5px;background:#fff;border:1px solid #cacaca;border-radius:4px;box-shadow:0 0.5px 0.5px rgba(0,0,0,0.1)"></div>
<div class="a" style="left:844.5px;top:380px;width:25px;height:13.5px;background:#c2300a;border:1px solid #a02408;border-radius:1.5px"></div>
<div class="a" style="left:884px;top:377.5px;width:83px;height:20px;background:#fff;border:1px solid #c6c6c6;border-radius:4.5px;overflow:hidden;box-shadow:0 0.5px 0.5px rgba(0,0,0,0.08)"></div>
<div class="a" style="left:950px;top:377.5px;width:17px;height:20px;background:linear-gradient(#5aa9fc,#1670ec);border-radius:0 4.5px 4.5px 0"></div>
<svg class="a" style="left:954.5px;top:381.0px;" width="8" height="13" viewBox="0 0 8 13"><path d="M1 4.5l3-3 3 3M1 8.5l3 3 3-3" fill="none" stroke="#fff" stroke-width="1.2"/></svg>
<div class="t" style="left:893px;top:382.43px;font-size:10.6px;color:#1a1a1a;font-weight:normal;">Normal</div>
<div class="a" style="left:975.5px;top:378px;width:42.5px;height:17.5px;background:#fff;border:1px solid #c3c3c3"></div>
<div class="t" style="left:979.5px;top:382.58px;font-size:10.6px;color:#111;font-weight:normal;">100%</div>
<div class="t" style="left:707px;width:300px;text-align:center;top:401.87px;font-size:9.6px;color:#333;font-weight:normal;">Fill</div>
<div class="t" style="left:773px;width:300px;text-align:center;top:401.87px;font-size:9.6px;color:#333;font-weight:normal;">Blending</div>
<div class="t" style="left:846px;width:300px;text-align:center;top:401.87px;font-size:9.6px;color:#333;font-weight:normal;">Opacity</div>
<div class="a" style="left:814px;top:419px;width:214px;height:1px;background:#d3d3d3"></div>
<div class="t" style="left:821px;top:427.83px;font-size:10.6px;color:#4a4a4a;font-weight:bold;">Borders</div>
<div class="a" style="left:814px;top:445px;width:214px;height:1px;background:#d3d3d3"></div>
<svg class="a" style="left:1005px;top:427px;" width="14" height="14" viewBox="0 0 14 14"><path d="M6 0.1v11.8M0.1 6h11.8" stroke="#9c9c9c" stroke-width="1.6"/></svg>
<div class="t" style="left:821px;top:453.83px;font-size:10.6px;color:#4a4a4a;font-weight:bold;">Shadows</div>
<div class="a" style="left:814px;top:471px;width:214px;height:1px;background:#d3d3d3"></div>
<svg class="a" style="left:1005px;top:453px;" width="14" height="14" viewBox="0 0 14 14"><path d="M6 0.1v11.8M0.1 6h11.8" stroke="#9c9c9c" stroke-width="1.6"/></svg>
<div class="t" style="left:821px;top:479.83px;font-size:10.6px;color:#4a4a4a;font-weight:bold;">Inner Shadows</div>
<div class="a" style="left:814px;top:497px;width:214px;height:1px;background:#d3d3d3"></div>
<svg class="a" style="left:1005px;top:479px;" width="14" height="14" viewBox="0 0 14 14"><path d="M6 0.1v11.8M0.1 6h11.8" stroke="#9c9c9c" stroke-width="1.6"/></svg>
<div class="t" style="left:821px;top:505.83px;font-size:10.6px;color:#4a4a4a;font-weight:bold;">Gaussian Blur</div>
<div class="a" style="left:814px;top:523px;width:214px;height:1px;background:#d3d3d3"></div>
<svg class="a" style="left:896px;top:505px;" width="11" height="13" viewBox="0 0 11 13"><path d="M1.5 5l3.5-3.5 3.5 3.5M1.5 8l3.5 3.5 3.5-3.5" fill="none" stroke="#4a4a4a" stroke-width="1.3"/></svg>
<div class="a" style="left:1006px;top:505px;width:12.5px;height:12.5px;background:#fff;border:1px solid #b3b3b3;border-radius:3px"></div>
<div class="a" style="left:814px;top:639px;width:214px;height:1px;background:#d6d6d6"></div>
<div class="a" style="left:814px;top:640px;width:213px;height:31px;background:#f5f5f5"></div>
<div class="t" style="left:821px;top:650.03px;font-size:10.6px;color:#4a4a4a;font-weight:bold;">Make Exportable</div>
<svg class="a" style="left:1006px;top:650px;" width="14" height="14" viewBox="0 0 14 14"><path d="M6 0.1v11.8M0.1 6h11.8" stroke="#9c9c9c" stroke-width="1.6"/></svg>
</div>
<div class="a" style="left:0;top:0;width:1028px;height:672px;border:1px solid #8c8c8c;border-radius:4px;box-shadow:inset 0 0 0 1px rgba(255,255,255,0.35)"></div>
</body></html>
